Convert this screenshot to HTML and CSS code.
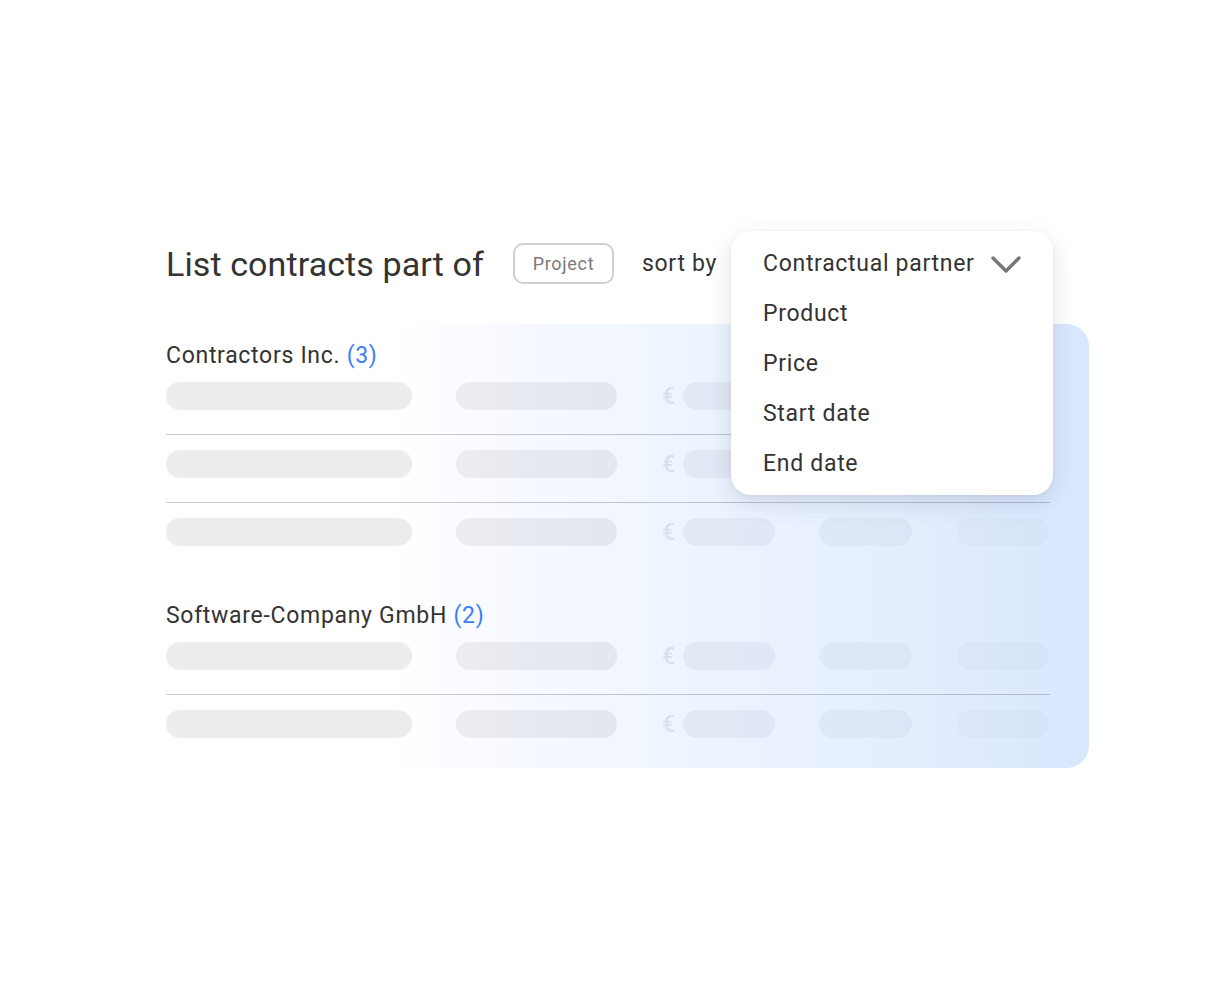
FILE: index.html
```html
<!DOCTYPE html>
<html lang="en">
<head>
  <meta charset="UTF-8">
  <meta name="viewport" content="width=device-width, initial-scale=1.0">
  <title>Contracts</title>
  <link rel="stylesheet" href="styles.css">
</head>
<body>

<div class="page">

  <div class="toolbar">
    <h1 class="title">List contracts part of</h1>
    <span class="chip">Project</span>
    <span class="sort-label">sort by</span>

    <!-- open sort menu -->
    <ul class="menu">
      <li class="menu-item selected">
        <span>Contractual partner</span>
        <svg class="chevron" width="30" height="17" viewBox="0 0 30 17">
          <polyline points="2,2 15,15 28,2" fill="none" stroke="#767676" stroke-width="3.4" stroke-linecap="round" stroke-linejoin="round"/>
        </svg>
      </li>
      <li class="menu-item">Product</li>
      <li class="menu-item">Price</li>
      <li class="menu-item">Start date</li>
      <li class="menu-item">End date</li>
    </ul>
  </div>

  <div class="list">

    <div class="group">
      <div class="group-name">Contractors Inc. <span class="count">(3)</span></div>
      <div class="row">
        <span class="bar name"></span>
        <span class="bar product"></span>
        <span class="euro">€</span>
        <span class="bar price"></span>
        <span class="bar start"></span>
        <span class="bar end"></span>
      </div>
      <div class="row">
        <span class="bar name"></span>
        <span class="bar product"></span>
        <span class="euro">€</span>
        <span class="bar price"></span>
        <span class="bar start"></span>
        <span class="bar end"></span>
      </div>
      <div class="row">
        <span class="bar name"></span>
        <span class="bar product"></span>
        <span class="euro">€</span>
        <span class="bar price"></span>
        <span class="bar start"></span>
        <span class="bar end"></span>
      </div>
    </div>

    <div class="group">
      <div class="group-name">Software-Company GmbH <span class="count">(2)</span></div>
      <div class="row">
        <span class="bar name"></span>
        <span class="bar product"></span>
        <span class="euro">€</span>
        <span class="bar price"></span>
        <span class="bar start"></span>
        <span class="bar end"></span>
      </div>
      <div class="row">
        <span class="bar name"></span>
        <span class="bar product"></span>
        <span class="euro">€</span>
        <span class="bar price"></span>
        <span class="bar start"></span>
        <span class="bar end"></span>
      </div>
    </div>

  </div>

</div>

</body>
</html>
```

FILE: styles.css
```css
body {
  margin: 0;
  background: #fff;
  font-family: Roboto, Arial, sans-serif;
  color: #333;
}
.page {
  width: 923px;
  padding: 243px 0 0 166px;
}
.toolbar {
  position: relative;
  display: flex;
  align-items: center;
  height: 41px;
}
.title {
  margin: 0 29px 0 0;
  font-size: 34px;
  font-weight: 400;
  color: #333;
  letter-spacing: 0.1px;
}
.chip {
  box-sizing: border-box;
  width: 101px;
  height: 41px;
  border: 2px solid #d0d0d0;
  border-radius: 10px;
  display: flex;
  align-items: center;
  justify-content: center;
  font-size: 18px;
  letter-spacing: 0.7px;
  color: #7a7a7a;
}
.sort-label {
  margin-left: 28px;
  font-size: 23px;
  letter-spacing: 0.7px;
  color: #333;
}
.menu {
  position: absolute;
  z-index: 2;
  left: 565px;
  top: -12px;
  box-sizing: border-box;
  width: 322px;
  height: 264px;
  margin: 0;
  padding: 7px 0 7px 32px;
  list-style: none;
  background: #fff;
  border-radius: 20px;
  box-shadow: 0 8px 24px rgba(40, 60, 100, 0.14), 0 1px 4px rgba(0, 0, 0, 0.05);
}
.menu-item {
  display: flex;
  align-items: center;
  height: 50px;
  font-size: 23px;
  letter-spacing: 0.7px;
  color: #333;
}
.chevron {
  margin-left: 16px;
  margin-top: 2px;
}
.list {
  position: relative;
  isolation: isolate;
  margin-top: 40px;
  padding: 18px 0 30px;
}
.list::before {
  content: "";
  position: absolute;
  z-index: -1;
  top: 0;
  bottom: 0;
  left: 229px;
  right: 0;
  border-radius: 0 22px 22px 0;
  background: linear-gradient(to right, rgba(246, 249, 255, 0) 0%, #f6f9ff 18%, #eaf2fe 55%, #d9e7fd 100%);
}
.group + .group {
  margin-top: 56px;
}
.group-name {
  height: 28px;
  line-height: 28px;
  margin-bottom: 12px;
  font-size: 23px;
  letter-spacing: 0.7px;
  color: #333;
}
.count {
  color: #3a7ff6;
}
.row {
  display: flex;
  align-items: center;
  width: 884px;
  height: 28px;
}
.row + .row {
  margin-top: 24px;
  padding-top: 15px;
  border-top: 1px solid rgba(0, 0, 0, 0.2);
}
.bar {
  height: 28px;
  border-radius: 14px;
}
.bar.name {
  width: 246px;
  background: rgba(30, 30, 20, 0.08);
}
.bar.product {
  width: 161px;
  margin-left: 44px;
  background: rgba(30, 30, 30, 0.065);
}
.euro {
  margin-left: 45px;
  width: 21px;
  font-size: 23px;
  font-weight: 500;
  color: rgba(60, 80, 120, 0.15);
}
.bar.price {
  width: 92px;
  background: rgba(30, 40, 60, 0.05);
}
.bar.start {
  width: 93px;
  margin-left: 44px;
  background: rgba(30, 40, 60, 0.035);
}
.bar.end {
  width: 92px;
  margin-left: 45px;
  background: rgba(30, 40, 60, 0.025);
}
```
